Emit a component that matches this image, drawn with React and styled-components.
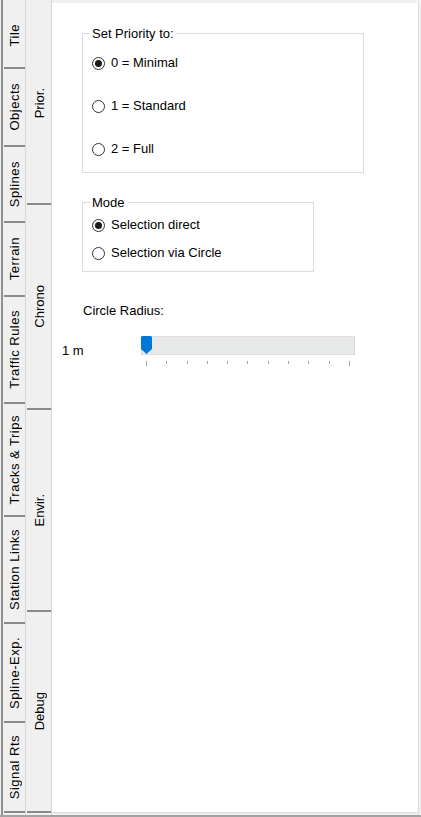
import React from "react";
import styled, { createGlobalStyle } from "styled-components";

const GlobalStyle = createGlobalStyle`
  html, body {
    margin: 0;
    padding: 0;
    background: #f0f0f0;
    font-family: "Liberation Sans", Arial, sans-serif;
    font-size: 13px;
    color: #000;
  }
`;

const Shell = styled.div`
  display: flex;
  width: 421px;
  height: 817px;
  box-sizing: border-box;
  padding-left: 1px;
  background: #f0f0f0;
  border-bottom: 2px solid #a3a3a3;
`;

const TabColumn = styled.div`
  display: flex;
  flex-direction: column;
  padding-top: 3px;
  box-sizing: border-box;
  width: ${(p) => p.$width}px;
  border-left: ${(p) => (p.$edge ? "2px solid #8f8f8f" : "none")};
  border-right: 1px solid #d6d6d6;
`;

const Tab = styled.div`
  height: ${(p) => p.$h}px;
  box-sizing: border-box;
  display: flex;
  align-items: center;
  justify-content: center;
  margin-left: 1px;
  border-bottom: 2px solid #8a8a8a;
  flex-shrink: 0;
`;

const TabLabel = styled.span`
  writing-mode: vertical-rl;
  transform: rotate(180deg);
  white-space: nowrap;
  line-height: 15px;
  letter-spacing: ${(p) => (p.$wide ? "0.5px" : "0")};
`;

const Panel = styled.div`
  flex: 1;
  margin: 3px 2px 2px 0;
  background: #fff;
  border-right: 1px solid #dcdcdc;
  border-bottom: 1px solid #dcdcdc;
  padding: 23px 0 0 10px;
`;

const GroupBox = styled.fieldset`
  margin: ${(p) => p.$top}px 0 0 20px;
  width: ${(p) => p.$width}px;
  box-sizing: border-box;
  min-width: 0;
  border: 1px solid #dcdcdc;
  padding: ${(p) => p.$pad};
  display: flex;
  flex-direction: column;
  gap: ${(p) => p.$gap}px;
`;

const Legend = styled.legend`
  padding: 0 2px;
  margin-left: -2px;
  line-height: 15px;
`;

const RadioRow = styled.label`
  display: flex;
  align-items: center;
  gap: 6px;
  height: 20px;
  line-height: 16px;
`;

const Radio = styled.span`
  width: 13px;
  height: 13px;
  box-sizing: border-box;
  border-radius: 50%;
  border: 1px solid #333;
  background: #fff;
  display: flex;
  align-items: center;
  justify-content: center;
  flex-shrink: 0;

  &::after {
    content: "";
    width: 7px;
    height: 7px;
    border-radius: 50%;
    background: #1a1a1a;
    display: ${(p) => (p.$on ? "block" : "none")};
  }
`;

const Caption = styled.div`
  margin: 31px 0 0 21px;
  line-height: 16px;
`;

const SliderRow = styled.div`
  display: flex;
  align-items: flex-start;
  margin-top: 17px;
`;

const ValueLabel = styled.div`
  width: 79px;
  padding-top: 7px;
  line-height: 16px;
`;

const Slider = styled.div`
  width: 214px;
`;

const Track = styled.div`
  position: relative;
  height: 19px;
  box-sizing: border-box;
  background: #e7e8e8;
  border: 1px solid #dedede;
`;

const Thumb = styled.svg`
  position: absolute;
  left: -1px;
  top: -1px;
`;

const Ticks = styled.div`
  display: flex;
  justify-content: space-between;
  align-items: flex-start;
  margin: 6px 5px 0 5px;
`;

const Tick = styled.span`
  width: 1px;
  height: ${(p) => (p.$major ? 5 : 3)}px;
  background: #a0a0a0;
`;

const outerTabs = [
  ["Tile", 66],
  ["Objects", 78],
  ["Splines", 76],
  ["Terrain", 74],
  ["Traffic Rules", 107],
  ["Tracks & Trips", 113],
  ["Station Links", 107],
  ["Spline-Exp.", 99],
  ["Signal Rts", 90],
];

const innerTabs = [
  ["Prior.", 202],
  ["Chrono", 205],
  ["Envir.", 202],
  ["Debug", 201],
];

const priorities = ["0 = Minimal", "1 = Standard", "2 = Full"];
const modes = ["Selection direct", "Selection via Circle"];

export default function App() {
  return (
    <>
      <GlobalStyle />
      <Shell>
        <TabColumn $width={25} $edge>
          {outerTabs.map(([name, h]) => (
            <Tab key={name} $h={h}>
              <TabLabel $wide>{name}</TabLabel>
            </Tab>
          ))}
        </TabColumn>
        <TabColumn $width={26}>
          {innerTabs.map(([name, h]) => (
            <Tab key={name} $h={h}>
              <TabLabel>{name}</TabLabel>
            </Tab>
          ))}
        </TabColumn>
        <Panel>
          <GroupBox $top={0} $width={282} $pad="12px 9px 13px" $gap={23}>
            <Legend>Set Priority to:</Legend>
            {priorities.map((p, i) => (
              <RadioRow key={p}>
                <Radio $on={i === 0} />
                {p}
              </RadioRow>
            ))}
          </GroupBox>
          <GroupBox $top={22} $width={232} $pad="5px 9px 8px" $gap={8}>
            <Legend>Mode</Legend>
            {modes.map((m, i) => (
              <RadioRow key={m}>
                <Radio $on={i === 0} />
                {m}
              </RadioRow>
            ))}
          </GroupBox>
          <Caption>Circle Radius:</Caption>
          <SliderRow>
            <ValueLabel>1 m</ValueLabel>
            <Slider>
              <Track>
                <Thumb width="11" height="18" viewBox="0 0 11 18">
                  <path d="M1.5 0H9.5A1.5 1.5 0 0 1 11 1.5V13L5.5 18L0 13V1.5A1.5 1.5 0 0 1 1.5 0Z" fill="#0078d7" />
                </Thumb>
              </Track>
              <Ticks>
                {Array.from({ length: 11 }, (_, i) => (
                  <Tick key={i} $major={i === 0 || i === 10} />
                ))}
              </Ticks>
            </Slider>
          </SliderRow>
        </Panel>
      </Shell>
    </>
  );
}
